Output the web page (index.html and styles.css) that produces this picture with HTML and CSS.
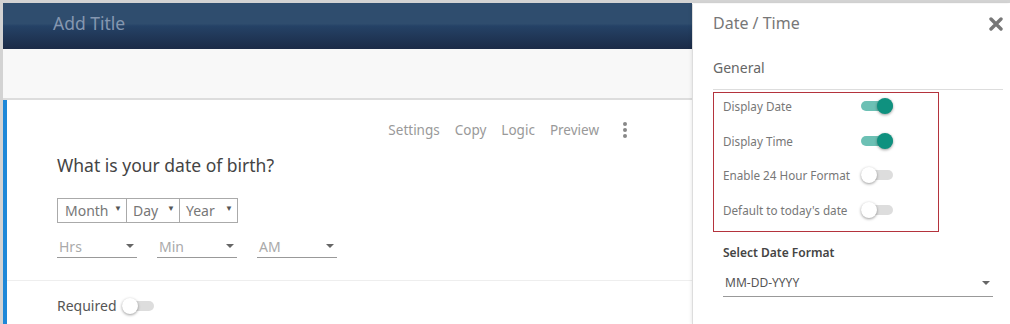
FILE: index.html
```html
<!DOCTYPE html>
<html lang="en">

<head>
    <meta charset="UTF-8">
    <meta name="viewport" content="width=device-width, initial-scale=1.0">
    <title>Date / Time</title>
    <link rel="stylesheet" href="styles.css">
</head>

<body>
    <div class="page">
        <div class="main">
            <div class="topbar">
                <span class="topbar-title">Add Title</span>
            </div>
            <div class="toolbar"></div>
            <div class="card">
                <div class="card-actions">
                    <span>Settings</span>
                    <span>Copy</span>
                    <span>Logic</span>
                    <span>Preview</span>
                    <span class="dots"><i></i><i></i><i></i></span>
                </div>
                <h3 class="question">What is your date of birth?</h3>
                <div class="date-row">
                    <div class="box-select month">Month <b>&#9660;</b></div>
                    <div class="box-select day">Day <b>&#9660;</b></div>
                    <div class="box-select year">Year <b>&#9660;</b></div>
                </div>
                <div class="time-row">
                    <div class="line-select">Hrs <b></b></div>
                    <div class="line-select">Min <b></b></div>
                    <div class="line-select">AM <b></b></div>
                </div>
                <div class="card-foot">
                    <span>Required</span>
                    <span class="toggle"></span>
                </div>
            </div>
        </div>

        <aside class="panel">
            <div class="panel-head">
                <span class="panel-title">Date / Time</span>
                <svg class="close" width="14" height="14" viewBox="0 0 14 14">
                    <path d="M2 2 L12 12 M12 2 L2 12" stroke="#777" stroke-width="3.4" stroke-linecap="round" />
                </svg>
            </div>
            <div class="panel-section">General</div>
            <div class="options">
                <div class="option"><span class="option-label">Display Date</span><span class="toggle on"></span></div>
                <div class="option"><span class="option-label">Display Time</span><span class="toggle on"></span></div>
                <div class="option"><span class="option-label">Enable 24 Hour Format</span><span class="toggle"></span></div>
                <div class="option"><span class="option-label">Default to today's date</span><span class="toggle"></span></div>
            </div>
            <div class="format">
                <div class="format-label">Select Date Format</div>
                <div class="format-select">MM-DD-YYYY <b></b></div>
            </div>
        </aside>
    </div>
</body>

</html>
```

FILE: styles.css
```css
* {
    margin: 0;
    padding: 0;
    box-sizing: border-box;
}

body {
    font-family: "Noto Sans", "Open Sans", sans-serif;
    background: #fff;
    overflow: hidden;
}

.page {
    display: flex;
    height: 324px;
    border-top: 3px solid #d3d3d3;
    border-left: 3px solid #d3d3d3;
}

.main {
    flex: 1;
    background: #fff;
}

.topbar {
    height: 46px;
    background: linear-gradient(#2f4d6e 0, #2f4d6e 45%, #254266 50%, #1b2b47 100%);
    padding: 0 0 7px 50px;
    display: flex;
    align-items: center;
}

.topbar-title {
    color: #8597b0;
    font-size: 17.5px;
}

.toolbar {
    height: 51px;
    background: #f8f8f8;
    border-bottom: 2px solid #ddd;
}

.card {
    border-left: 4px solid #1e88d8;
    height: 230px;
    padding-top: 20px;
}

.card-actions {
    display: flex;
    justify-content: flex-end;
    align-items: center;
    gap: 15px;
    height: 20px;
    padding-right: 65px;
    font-size: 13.5px;
    color: #999;
}

.dots {
    display: flex;
    flex-direction: column;
    gap: 2px;
    margin-left: 9px;
}

.dots i {
    width: 4px;
    height: 4px;
    border-radius: 50%;
    background: #888;
}

.question {
    margin: 13px 0 0 50px;
    font-size: 17.5px;
    font-weight: normal;
    line-height: 24px;
    color: #444;
}

.date-row {
    display: flex;
    margin: 21px 0 0 50px;
}

.box-select {
    height: 25px;
    border: 1px solid #aaa;
    display: flex;
    align-items: center;
    justify-content: space-between;
    padding: 0 4px 0 7px;
    font-size: 14px;
    color: #777;
}

.box-select + .box-select {
    border-left: 0;
    padding-left: 6px;
}

.box-select b {
    font-size: 8px;
    color: #555;
    margin-top: -6px;
}

.month {
    width: 70px;
}

.day {
    width: 53px;
}

.year {
    width: 58px;
}

.time-row {
    display: flex;
    gap: 20px;
    margin: 10px 0 0 50px;
}

.line-select {
    width: 80px;
    height: 25px;
    border-bottom: 1px solid #999;
    display: flex;
    align-items: center;
    justify-content: space-between;
    padding: 2px 0 0 2px;
    font-size: 14px;
    color: #aaa;
}

.line-select b,
.format-select b {
    width: 0;
    height: 0;
    border-left: 4px solid transparent;
    border-right: 4px solid transparent;
    border-top: 4px solid #666;
    margin-right: 3px;
}

.card-foot {
    margin-top: 22px;
    border-top: 1px solid #eee;
    padding: 15px 0 0 50px;
    display: flex;
    align-items: center;
    gap: 5px;
    font-size: 14px;
    color: #555;
}

.toggle {
    position: relative;
    display: inline-block;
    width: 32px;
    height: 10px;
    border-radius: 5px;
    background: #ddd;
}

.toggle::after {
    content: "";
    position: absolute;
    left: 0;
    top: -3px;
    width: 16px;
    height: 16px;
    border-radius: 50%;
    background: #fff;
    box-shadow: 0 1px 3px rgba(0, 0, 0, 0.4);
}

.toggle.on {
    background: #6cc0b4;
}

.toggle.on::after {
    left: auto;
    right: 0;
    background: #0f917f;
}

.panel {
    width: 318px;
    background: #fff;
    border-left: 1px solid #ddd;
    box-shadow: -1px 0 3px rgba(0, 0, 0, 0.08);
    padding: 0 7px 0 20px;
    margin-top: 1px;
}

.panel-head {
    height: 38px;
    display: flex;
    align-items: center;
    justify-content: space-between;
}

.panel-title {
    font-size: 16px;
    color: #777;
}

.close {
    margin-top: 2px;
}

.panel-section {
    height: 48px;
    padding-top: 16px;
    border-bottom: 1px solid #ddd;
    font-size: 14px;
    color: #666;
}

.options {
    width: 226px;
    margin-top: 2px;
    border: 1px solid #b4333d;
    padding: 0 0 8px 9px;
    display: flex;
    flex-direction: column;
    gap: 8.7px;
}

.option {
    height: 26px;
    display: flex;
    align-items: center;
}

.option-label {
    width: 138px;
    font-size: 11.7px;
    color: #777;
}

.format {
    padding: 12px 10px 0 10px;
}

.format-label {
    font-size: 12px;
    font-weight: 600;
    color: #444;
}

.format-select {
    margin-top: 8px;
    height: 28px;
    border-bottom: 1px solid #999;
    display: flex;
    align-items: center;
    justify-content: space-between;
    padding-left: 2px;
    font-size: 12px;
    color: #555;
}
```
